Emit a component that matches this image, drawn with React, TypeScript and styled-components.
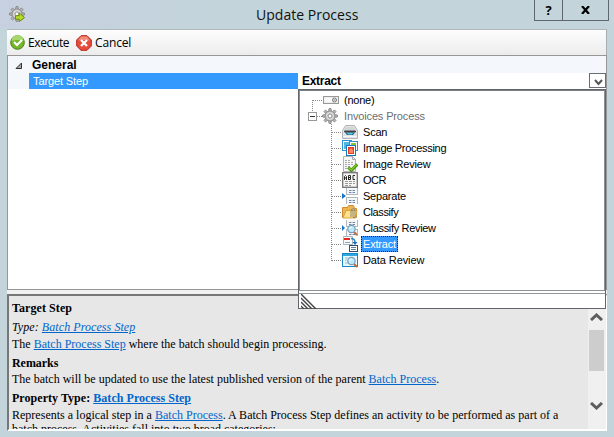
import React from "react";
import styled, { createGlobalStyle } from "styled-components";

const Global = createGlobalStyle`
  * { box-sizing: border-box; }
  body { margin: 0; overflow: hidden; }
`;
const Window = styled.div`
  position: relative; width: 614px; height: 437px; overflow: hidden;
  background: linear-gradient(90deg, #c7d0e0 0, #c3d5db 240px) top / 100% 28px no-repeat #c3d5db;
  font-family: "Liberation Sans", sans-serif; font-size: 11px; color: #000;
`;
const TitleBar = styled.header`
  height: 29px; display: grid; grid-template-columns: 256px 278px 28px 46px; align-items: start;
`;
const AppIcon = styled.div`padding: 6px 0 0 9px; height: 29px;`;
const Title = styled.div`
  font: 14px/29px "Open Sans", sans-serif; letter-spacing: 0.02px; white-space: nowrap; color: #111;
`;
const CaptionButton = styled.button<{ $last?: boolean }>`
  height: 21px; padding: 0; border: 1px solid #5f6672; border-top: 0; background: transparent;
  ${p => (p.$last ? "border-left: 0;" : "")}
  width: ${p => (p.$last ? 47 : 29)}px; display: flex; align-items: center; justify-content: center;
  font: bold 13px/20px "Open Sans", sans-serif;
`;
const Content = styled.main`width: 600px; margin-left: 7px;`;
const Toolbar = styled.div`
  height: 26px; display: flex; align-items: center; padding-left: 3px;
  border-top: 1px solid #b0b7bb; border-right: 1px solid #a7adb0;
  background: linear-gradient(#fdfdfd, #ececec);
`;
const ToolButton = styled.div<{ $width: number; $spacing: number }>`
  display: flex; align-items: center; gap: 3px; width: ${p => p.$width}px; height: 25px;
  font: 12px/25px "Open Sans", sans-serif; letter-spacing: ${p => p.$spacing}px; white-space: nowrap;
`;
const PropertyGrid = styled.section`
  height: 235px; border: 1px solid #969696; background: #fff;
`;
const Category = styled.div`
  height: 17px; display: grid; grid-template-columns: 24px 1fr; align-items: center;
  background: #f4f7fc; font: bold 12px/18px "Liberation Sans", sans-serif; letter-spacing: 0;
  svg { margin-left: 7px; }
`;
const PropertyRow = styled.div`
  height: 15px; display: grid; grid-template-columns: 21px 269px 1fr 17px; background: #fff;
`;
const Gutter = styled.div`background: #f4f7fc;`;
const PropertyName = styled.div`
  background: #3399ff; color: #fff; padding-left: 4px; line-height: 16px; letter-spacing: -0.12px;
`;
const PropertyValue = styled.div`
  padding-left: 4px; font-weight: bold; font-size: 12px; line-height: 16px; letter-spacing: -0.3px;
`;
const DropButton = styled.div`
  height: 15px; border: 1px solid #6a6d73; background: #fff;
  svg { display: block; margin: 5px 0 0 4px; }
`;
const Popup = styled.div`
  position: absolute; left: 298px; top: 89px; width: 308px; height: 220px;
  border: 1px solid #62656b; background: #fff;
`;
const Tree = styled.div`
  height: 201px; padding-top: 1px; border: 1px solid #8c9097; border-top-color: #777b82;
`;
const TreeRow = styled.div`height: 16px; display: flex; align-items: center;`;
const TreeLabel = styled.span<{ $muted?: boolean; $selected?: boolean; $spacing: number }>`
  margin-left: ${p => (p.$muted ? 4 : 3)}px; padding: 0 2px; height: 16px; line-height: 16px; white-space: nowrap;
  letter-spacing: ${p => p.$spacing}px; color: ${p => (p.$selected ? "#fff" : p.$muted ? "#6d6d6d" : "#000")};
  ${p => (p.$selected ? "background: #3399ff; outline: 1px dotted #33210a; outline-offset: -1px;" : "")}
`;
const ResizeStrip = styled.div`
  margin-top: 2px; height: 16px; border-top: 1px solid #94979b;
  svg { display: block; margin-left: 2px; }
`;
const Splitter = styled.div`height: 4px; background: #f0f0f0;`;
const HelpPane = styled.section`
  height: 137px; display: grid; grid-template-columns: 1fr 18px; overflow: hidden;
  border: 1px solid #fff; border-top: 2px solid #777; border-left: 2px solid #777; border-bottom-width: 2px;
  background: #e7e7e7;
`;
const HelpText = styled.article`
  padding: 4px 0 0 3px; overflow: hidden; font: 12px/17px "Liberation Serif", serif;
`;
const HelpLine = styled.p<{ $height: number; $spacing: number; $bold?: boolean; $italic?: boolean }>`
  margin: 0; height: ${p => p.$height}px; line-height: 17px; white-space: nowrap;
  letter-spacing: ${p => p.$spacing}px;
  font-weight: ${p => (p.$bold ? "bold" : "normal")}; font-style: ${p => (p.$italic ? "italic" : "normal")};
`;
const Link = styled.a`color: #0066cc; text-decoration: underline; text-underline-offset: 1px;`;
const Scrollbar = styled.div`
  background: #f0f0f0; padding: 17px 2px 0 1px; display: flex; flex-direction: column; align-items: center;
  svg { display: block; flex: none; }
`;
const Thumb = styled.div`flex: none; width: 15px; height: 41px; margin: 9px 0 31px; background: #cdcdcd;`;
const Icon = styled.svg`display: block; flex: none;`;

const teeth = [0, 45, 90, 135, 180, 225, 270, 315];
const Gear = ({ arrow }: { arrow?: boolean }) => (
  <Icon width="16" height="16" viewBox="0 0 16 16">
    {teeth.map(a => (
      <path key={a} d="M6.6 3.5 7 .6h2l.4 2.9z" fill="#bbb" stroke="#858585" strokeWidth=".9" transform={`rotate(${a} 8 8)`} />
    ))}
    <circle cx="8" cy="8" r="5" fill="#c9c9c9" stroke="#8a8a8a" strokeWidth=".9" />
    <circle cx="8" cy="8" r="3.2" fill="none" stroke="#e2e2e2" strokeWidth="1" />
    <circle cx="8" cy="8" r="2" fill="#fff" stroke="#858585" strokeWidth=".9" />
    {arrow && <path d="M6.5 9.7h3.7V6.8l5.3 4.8-5.3 4v-2.4H6.5z" fill="#b5d92a" stroke="#6b8f0c" strokeWidth="1" />}
  </Icon>
);

const Page = ({ y, h = 7 }: { y: number; h?: number }) => (
  <g>
    <rect x="4.5" y={y + 0.5} width="11" height={h} fill="#f5f6f7" stroke="#b4b8bc" />
    <path d={`M7 ${y + 3.5}h6M7 ${y + 5.5}h6`} stroke="#7186a8" strokeDasharray="2.5 1" />
  </g>
);
const Lens = () => (
  <g>
    <path d="m12 12 3 3" stroke="#bc683b" strokeWidth="2" />
    <circle cx="9.5" cy="9" r="3.7" fill="#bce9fa" stroke="#7c9eb4" strokeWidth="1.2" />
    <path d="M7.5 9q.3-2 2.3-2" stroke="#fff" fill="none" />
  </g>
);

const glyphs: Record<string, React.ReactNode> = {
  none: <><rect x=".5" y="4.5" width="15" height="7" fill="#eee" stroke="#999" /><path d="M2 6h7v4H2z" fill="#fafafa" /><circle cx="11.5" cy="8" r="2" fill="#fff" stroke="#777" /><path d="m10.5 7 2 2m0-2-2 2" stroke="#777" strokeWidth=".6" /></>,
  scan: <><path d="M3.5 1.5h9l3 5v8H.5v-8z" fill="#e1e3e5" stroke="#b3b6b9" /><path d="M4 3h8l2 3.5H2z" fill="#d3d6d8" /><rect x="2" y="6.5" width="12" height="2" rx="1" fill="#3c4144" /><path d="M3 8.5h10L11 11H5z" fill="#20658b" /><path d="M5 9h6l-1 1.6H6z" fill="#58c7e8" /><path d="M1 12.5h14" stroke="#f9f9f9" /></>,
  processing: <><rect x=".5" y=".5" width="9" height="10" fill="#fff" stroke="#2f8fd0" /><rect x="2" y="2" width="6" height="7" fill="#52b5e4" /><rect x="7.5" y="1.5" width="8" height="9" fill="#fff" stroke="#2f8fd0" /><rect x="9" y="3" width="5" height="6" fill="#8ac832" /><rect x="4.5" y="5.5" width="9" height="10" fill="#fff" stroke="#1679bd" /><rect x="6" y="7" width="6" height="7" fill="#e63b25" /><path d="M7 13v-3l2-2 2 2v3z" fill="#ff8a60" /></>,
  review: <><path d="M1.5.5h9l3 3v12h-12z" fill="#f7f7f7" stroke="#b4b4b4" /><path d="M10.5.5v3h3" fill="none" stroke="#aaa" /><path d="M3 4.5h5M3 6.5h8M3 8.5h8M3 10.5h5M3 12.5h4" stroke="#aaa" strokeDasharray="2 1" /><path d="m6.2 11.3 3.2 3 5.8-6" fill="none" stroke="#3e870c" strokeWidth="3" /><path d="m6.6 11.6 2.8 2.4 5.2-5.4" fill="none" stroke="#80ce25" strokeWidth="1.5" /></>,
  ocr: <><rect x=".7" y=".7" width="14.6" height="14.6" fill="#f7f7f4" stroke="#747474" strokeWidth="1.3" /><g fill="none" stroke="#292929"><path d="M2.5 8V4.5l1-1 1 1V8m-2-2h2M6.5 8V3.5h2v4h-2m0-2h2M13 3.5h-2v4h2" /></g><path d="M3 9.5h10M3 11.5h10M3 13.5h6" stroke="#999" strokeDasharray="3 1" /></>,
  separate: <><Page y={-1} /><Page y={9} /><path d="M0 5v6l4-3z" fill="#1675c8" /></>,
  classify: <><path d="M.5 13.5v-10h5l1-2h5l1 3h2v9z" fill="#e9b653" stroke="#cf8c2e" /><path d="M1 14 4 6.5h11L13.5 14z" fill="#ffe28e" stroke="#dda134" /><path d="M9 13V7q1-2 2 0v6q1 2 2 0V6q-2-3-4 0" fill="none" stroke="#8b877a" /></>,
  classifyReview: <><Page y={-1} /><Page y={9} /><path d="M0 5v6l3-3z" fill="#1675c8" /><Lens /></>,
  extract: <><path d="M1.5.5h9v8h-9z" fill="#f9fafb" stroke="#aab2bd" /><path d="M2 3h6" stroke="#e22b20" strokeWidth="2" /><path d="M3 6.5h5" stroke="#8da3bd" /><path d="M9 2.5q4 0 4 4" fill="none" stroke="#2a84ce" strokeWidth="1.5" /><path d="m10.5 6 2.5 3 2.5-3z" fill="#176db5" /><rect x="7.5" y="9.5" width="8" height="6" fill="#fff" stroke="#314a68" /><path d="M9 11.5h5M9 13.5h5" stroke="#657c97" /></>,
  data: <><rect x=".5" y="1.5" width="15" height="13" fill="#eaf8ff" stroke="#1687c5" /><path d="M1 3h14" stroke="#31a8df" strokeWidth="2" /><path d="M3 6h3M3 8h2M3 11h3" stroke="#91bdd1" /><Lens /></>,
};

const TreeLines = ({ kind }: { kind: string }) => {
  const child = kind === "child" || kind === "last";
  return (
    <Icon width={child ? 42 : kind === "root" ? 22 : 23} height="16" shapeRendering="crispEdges">
      <g fill="none" stroke="#888" strokeDasharray="1 1">
        {kind === "none" && <path d="M12.5 8v8M12.5 8.5H23" />}
        {kind === "root" && <path d="M12.5 0v4M17 8.5h5" />}
        {child && <path d={`M31.5 0v${kind === "last" ? 9 : 16}M31.5 8.5H42`} />}
      </g>
      {kind === "root" && <><rect x="8.5" y="4.5" width="8" height="8" fill="#fff" stroke="#999" /><path d="M10 8.5h5" stroke="#333" /></>}
    </Icon>
  );
};

const steps = [
  { icon: "scan", label: "Scan", spacing: -0.2 },
  { icon: "processing", label: "Image Processing", spacing: -0.3 },
  { icon: "review", label: "Image Review", spacing: -0.18 },
  { icon: "ocr", label: "OCR", spacing: -0.5 },
  { icon: "separate", label: "Separate", spacing: -0.22 },
  { icon: "classify", label: "Classify", spacing: -0.4 },
  { icon: "classifyReview", label: "Classify Review", spacing: -0.33 },
  { icon: "extract", label: "Extract", spacing: -0.2 },
  { icon: "data", label: "Data Review", spacing: -0.1 },
];

const Glyph = ({ name }: { name: string }) => <Icon width="16" height="16" viewBox="0 0 16 16">{glyphs[name]}</Icon>;

const StepTree = () => (
  <Tree>
    <TreeRow><TreeLines kind="none" /><Glyph name="none" /><TreeLabel $spacing={-0.25}>(none)</TreeLabel></TreeRow>
    <TreeRow><TreeLines kind="root" /><Gear /><TreeLabel $muted $spacing={-0.14}>Invoices Process</TreeLabel></TreeRow>
    {steps.map((s, i) => (
      <TreeRow key={s.label}>
        <TreeLines kind={i === steps.length - 1 ? "last" : "child"} />
        <Glyph name={s.icon} />
        <TreeLabel $selected={s.label === "Extract"} $spacing={s.spacing}>{s.label}</TreeLabel>
      </TreeRow>
    ))}
  </Tree>
);

export default function App() {
  return (
    <Window>
      <Global />
      <TitleBar>
        <AppIcon><Gear arrow /></AppIcon>
        <Title>Update Process</Title>
        <CaptionButton>?</CaptionButton>
        <CaptionButton $last aria-label="Close">
          <svg width="9" height="8"><path d="m1 0 7 8M8 0 1 8" stroke="#000" strokeWidth="2.2" /></svg>
        </CaptionButton>
      </TitleBar>
      <Content>
        <Toolbar>
          <ToolButton $width={66} $spacing={-0.38}>
            <Icon width="15" height="15" viewBox="0 0 15 15"><circle cx="7.5" cy="7.5" r="6.8" fill="#77b52b" stroke="#468313" /><path d="M1.5 6a6 6 0 0 1 12 0q-6-2-12 0" fill="#a7d66a" /><path d="m4 7 3 3 5-5" fill="none" stroke="#fff" strokeWidth="2" /></Icon>
            Execute
          </ToolButton>
          <ToolButton $width={60} $spacing={-0.15}>
            <Icon width="16" height="16" viewBox="0 0 16 16"><path d="M5 .7h6L15.3 5v6L11 15.3H5L.7 11V5z" fill="#e64b3c" stroke="#b6261c" /><path d="M5 1.5h6l3 4q-6-1-12 0z" fill="#f28b7d" /><path d="m5 5 6 6m0-6-6 6" stroke="#fff" strokeWidth="2.3" /></Icon>
            Cancel
          </ToolButton>
        </Toolbar>
        <PropertyGrid>
          <Category><svg width="7" height="7"><path d="M6.5 1v5.5H1z" fill="#aaa" stroke="#333" /></svg>General</Category>
          <PropertyRow>
            <Gutter /><PropertyName>Target Step</PropertyName><PropertyValue>Extract</PropertyValue>
            <DropButton><svg width="9" height="7"><path d="m1 1 3.5 4L8 1" fill="none" stroke="#555" strokeWidth="2" /></svg></DropButton>
          </PropertyRow>
        </PropertyGrid>
        <Splitter />
        <HelpPane>
          <HelpText>
            <HelpLine $height={19} $spacing={0.08} $bold>Target Step</HelpLine>
            <HelpLine $height={17} $spacing={0.07} $italic>Type: <Link>Batch Process Step</Link></HelpLine>
            <HelpLine $height={19} $spacing={0}>The <Link>Batch Process Step</Link> where the batch should begin processing.</HelpLine>
            <HelpLine $height={16} $spacing={-0.05} $bold>Remarks</HelpLine>
            <HelpLine $height={19} $spacing={0}>The batch will be updated to use the latest published version of the parent <Link>Batch Process</Link>.</HelpLine>
            <HelpLine $height={17} $spacing={0.04} $bold>Property Type: <Link>Batch Process Step</Link></HelpLine>
            <HelpLine $height={14} $spacing={0.01}>Represents a logical step in a <Link>Batch Process</Link>. A Batch Process Step defines an activity to be performed as part of a</HelpLine>
            <HelpLine $height={16} $spacing={0}>batch process. Activities fall into two broad categories:</HelpLine>
          </HelpText>
          <Scrollbar>
            <svg width="13" height="8"><path d="m1 7 5.5-5L12 7" fill="none" stroke="#5d5d5d" strokeWidth="3" /></svg>
            <Thumb />
            <svg width="13" height="8"><path d="m1 1 5.5 5L12 1" fill="none" stroke="#5d5d5d" strokeWidth="3" /></svg>
          </Scrollbar>
        </HelpPane>
      </Content>
      <Popup>
        <StepTree />
        <ResizeStrip><svg width="16" height="15"><path d="m0 0 15 15M0 4l11 11M0 8l7 7M0 12l3 3" stroke="#444" strokeWidth="1.4" /></svg></ResizeStrip>
      </Popup>
    </Window>
  );
}
